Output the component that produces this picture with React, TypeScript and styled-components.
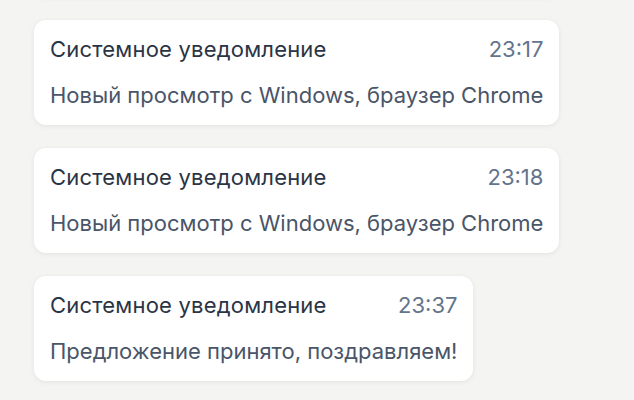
import React from 'react';
import styled, { createGlobalStyle } from 'styled-components';

const GlobalStyle = createGlobalStyle`
  html, body {
    margin: 0;
    padding: 0;
    background: #f4f4f3;
    font-family: Inter, "Noto Sans", sans-serif;
  }
`;

// page
const Page = styled.div`
  width: 634px;
  height: 400px;
  overflow: hidden;
  background: #f4f4f3;
`;

// list of notifications, scrolled so the previous one is just out of view
const List = styled.div`
  display: flex;
  flex-direction: column;
  align-items: flex-start;
  gap: 23px;
  padding-left: 34px;
  margin-top: -108px;
`;

const Card = styled.div`
  display: flex;
  flex-direction: column;
  gap: 20px;
  padding: 16px 16px 17px 16px;
  background: #ffffff;
  border-radius: 12px;
  box-shadow: 0 1px 5px rgba(0, 0, 0, 0.08);
`;

const Header = styled.div`
  display: flex;
  justify-content: space-between;
  gap: 24px;
  line-height: 26px;
`;

const Title = styled.span`
  font-size: 22px;
  letter-spacing: 0.2px;
  color: #2a3445;
`;

const Time = styled.span`
  font-size: 22px;
  color: #64748b;
`;

const Body = styled.div`
  font-size: 22px;
  line-height: 26px;
  color: #4a5568;
  white-space: nowrap;
`;

type Note = { time: string; text: string };

const notes: Note[] = [
  { time: '23:16', text: 'Новый просмотр с Windows, браузер Chrome' },
  { time: '23:17', text: 'Новый просмотр с Windows, браузер Chrome' },
  { time: '23:18', text: 'Новый просмотр с Windows, браузер Chrome' },
  { time: '23:37', text: 'Предложение принято, поздравляем!' },
];

const App = () => {
  return (
    <Page>
      <GlobalStyle />
      <List>
        {notes.map((n, i) => (
          <Card key={i}>
            <Header>
              <Title>Системное уведомление</Title>
              <Time>{n.time}</Time>
            </Header>
            <Body>{n.text}</Body>
          </Card>
        ))}
      </List>
    </Page>
  );
};

export default App;
